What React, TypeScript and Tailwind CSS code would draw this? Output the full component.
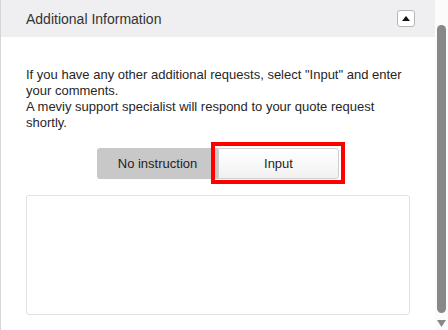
import React, { useState } from 'react';

const App: React.FC = () => {
  const [open, setOpen] = useState(true);
  const [mode, setMode] = useState<'none' | 'input'>('input');

  return (
    <main className="flex h-[330px] w-[448px] overflow-hidden bg-white text-[#262626] font-['Liberation_Sans',Arial,sans-serif]">
      <div className="flex w-[435px] flex-col border-l border-[#d6d6d6]">
        <div className="flex h-[37px] items-center justify-between bg-[#efeff1] pl-[25px] pr-[20px]">
          <span className="text-[14px] leading-none text-[#333]">Additional Information</span>
          <button
            onClick={() => setOpen(!open)}
            className="flex h-[17px] w-[18px] items-center justify-center rounded-[3px] border border-[#b5b5b5] bg-white"
          >
            <svg width="8" height="5" viewBox="0 0 8 5">
              <path d="M0 5 L4 0 L8 5 Z" fill="#111" />
            </svg>
          </button>
        </div>

        <div className="flex flex-col px-[25px] pt-[30px]">
          <p className="text-[13px] leading-[16px]">
            If you have any other additional requests, select "Input" and enter your comments.
            <br />
            A meviy support specialist will respond to your quote request shortly.
          </p>

          <div className="mt-[17px] flex justify-center">
            <button
              onClick={() => setMode('none')}
              className="h-[31px] w-[121px] rounded-l-[3px] bg-[#c8c8c8] text-[13px] text-[#1f1f1f]"
            >
              No instruction
            </button>
            <div className="relative">
              <button
                onClick={() => setMode('input')}
                className="h-[31px] w-[121px] rounded-r-[3px] border border-[#cfcfcf] bg-gradient-to-b from-white to-[#f1f1f1] text-[13px] text-[#1f1f1f]"
              >
                Input
              </button>
              {mode === 'input' && (
                <div className="pointer-events-none absolute -left-[7px] -right-[6px] -top-[6px] -bottom-[5px] border-4 border-[#ff0000]" />
              )}
            </div>
          </div>

          <textarea className="mt-[16px] h-[120px] w-full resize-none rounded-[3px] border border-[#e2e2e2] outline-none" />
        </div>
      </div>

      <div className="flex w-[13px] flex-col items-center bg-[#fbfbfb] pt-[25px]">
        <div className="h-[288px] w-[9px] rounded-[5px] bg-[#888]" />
        <svg className="mt-[7px]" width="9" height="7" viewBox="0 0 9 7">
          <path d="M0 0 L9 0 L4.5 7 Z" fill="#888" />
        </svg>
      </div>
    </main>
  );
};

export default App;
